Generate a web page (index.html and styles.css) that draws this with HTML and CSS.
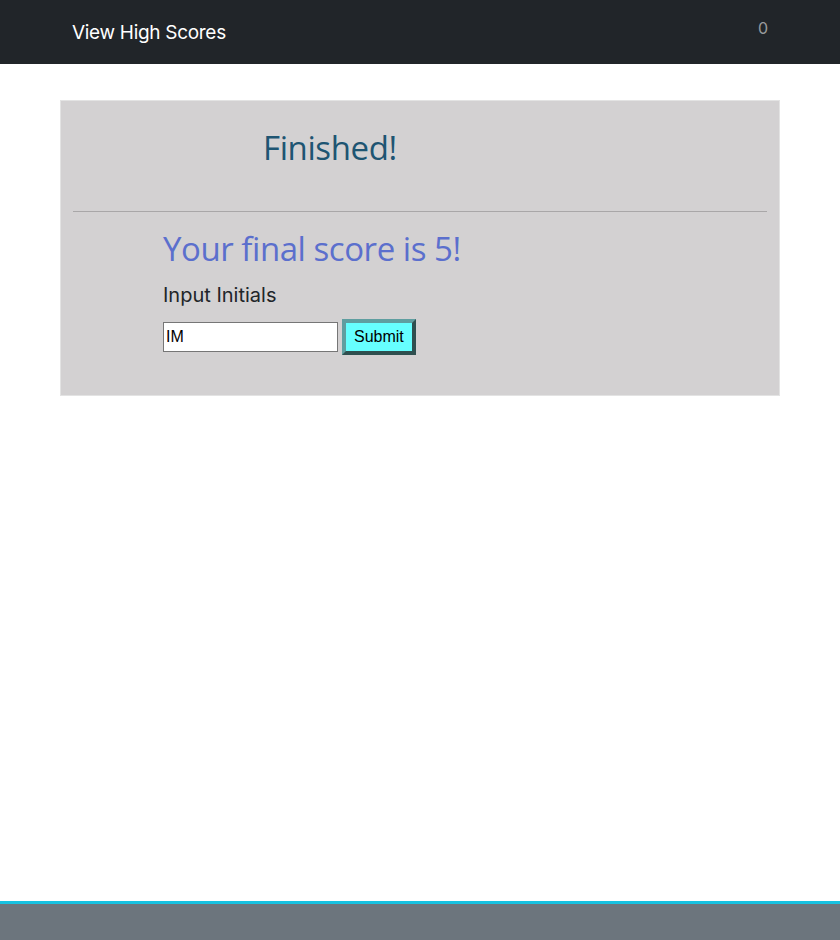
FILE: index.html
```html
<!DOCTYPE html>
<html>
<head>
<meta charset="utf-8">
<link rel="stylesheet" href="styles.css">
</head>
<body>
<nav class="navbar">
  <div class="container nav-inner">
    <a class="brand" href="#">View High Scores</a>
    <span class="timer">0</span>
  </div>
</nav>
<main class="container">
  <section class="card">
    <h1 class="title">Finished!</h1>
    <hr class="divider">
    <div class="result">
      <h2 class="score">Your final score is 5!</h2>
      <p class="label">Input Initials</p>
      <form class="form">
        <input class="initials" type="text" value="IM">
        <button class="submit" type="button">Submit</button>
      </form>
    </div>
  </section>
</main>
<footer class="footer"></footer>
</body>
</html>
```
FILE: styles.css
```css
html, body {
  margin: 0;
  padding: 0;
}
body {
  font-family: Inter, "Liberation Sans", sans-serif;
  color: #212529;
  background: #fff;
  min-height: 940px;
}
.container {
  width: 720px;
  margin: 0 auto;
  box-sizing: border-box;
}
.navbar {
  background: #212529;
  height: 64px;
}
.nav-inner {
  display: flex;
  justify-content: space-between;
  align-items: center;
  height: 64px;
  padding: 0 12px;
}
.brand {
  color: #fff;
  text-decoration: none;
  font-size: 19px;
  letter-spacing: -0.3px;
}
.timer {
  color: rgba(255,255,255,0.55);
  font-size: 16px;
  margin-top: -8px;
}
.card {
  margin-top: 36px;
  background: #d3d1d2;
  border: 1px solid #e3e3e3;
  padding: 0 12px 40px;
}
.title {
  margin: 0;
  padding: 24px 0 0 190px;
  height: 86px;
  font-family: "Open Sans", sans-serif;
  font-weight: 400;
  font-size: 33px;
  color: #1e5572;
  letter-spacing: -0.4px;
}
.divider {
  margin: 0;
  border: 0;
  border-top: 1px solid #a9a7a8;
}
.result {
  padding-left: 90px;
  padding-top: 17px;
}
.score {
  margin: 0;
  font-family: "Open Sans", sans-serif;
  font-weight: 400;
  font-size: 33px;
  color: #5b6fcd;
  letter-spacing: -0.45px;
  line-height: 40px;
}
.label {
  margin: 12px 0 0;
  font-size: 20px;
  line-height: 28px;
}
.form {
  display: flex;
  align-items: center;
  gap: 4px;
  margin-top: 10px;
}
.initials {
  width: 175px;
  height: 30px;
  box-sizing: border-box;
  border: 1px solid #767676;
  font-family: "Liberation Sans", sans-serif;
  font-size: 16px;
  padding: 1px 2px;
  margin: 0;
}
.submit {
  height: 36px;
  box-sizing: border-box;
  border: 4px solid;
  border-color: #5f9ea0 #2f4f4f #2f4f4f #5f9ea0;
  background: #66ffff;
  font-family: "Liberation Sans", sans-serif;
  font-size: 16px;
  padding: 0 8px;
  color: #000;
}
.footer {
  position: fixed;
  left: 0;
  right: 0;
  bottom: 0;
  height: 36px;
  background: #6c757d;
  border-top: 3px solid #17c1e0;
}
```
